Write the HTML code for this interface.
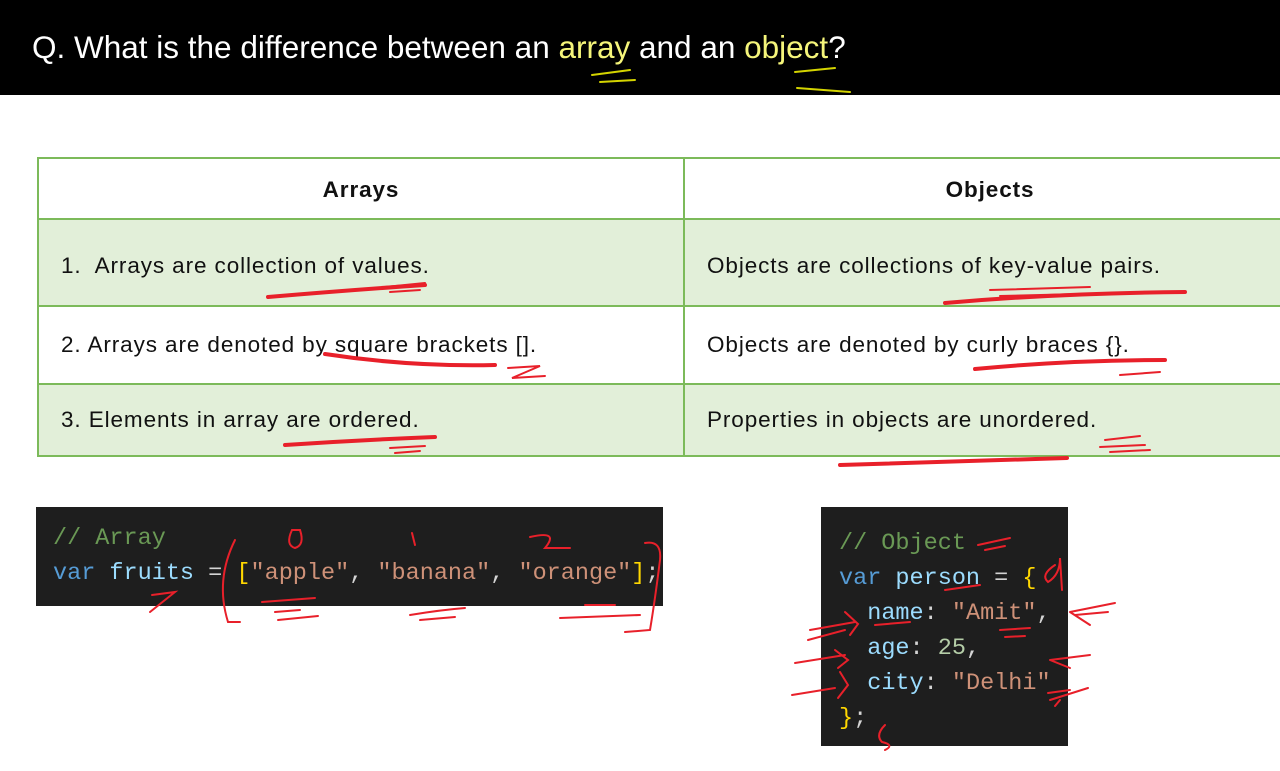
<!DOCTYPE html>
<html><head><meta charset="utf-8"><style>
body{margin:0;width:1280px;height:771px;background:#fff;position:relative;overflow:hidden;font-family:"Liberation Sans",sans-serif}
.top{position:absolute;left:0;top:0;width:1280px;height:95px;background:#000}
.top div{position:absolute;left:32px;top:29px;color:#fff;font-size:31.5px}
.y{color:#f5f57a}
table{position:absolute;left:37px;top:157px;border-collapse:collapse;width:1260px;font-size:22.5px;letter-spacing:0.9px;color:#111}
td{border:2px solid #7cba5a;padding:0 22px}
.h td{background:#fff;height:56px;text-align:center;font-weight:bold;padding-top:3px}
.g td{background:#e2efd9}
.code{position:absolute;background:#1e1e1e;font-family:"Liberation Mono",monospace;font-size:23.5px;line-height:35px;white-space:pre}
.c{color:#6a9955}.k{color:#569cd6}.v{color:#9cdcfe}.s{color:#ce9178}.b{color:#ffd700}.n{color:#b5cea8}.w{color:#d4d4d4}
svg{position:absolute;left:0;top:0}
</style></head><body>
<div class="top"><div>Q. What is the difference between an <span class="y">array</span> and an <span class="y">object</span>?</div></div>
<table>
<tr class="h"><td style="width:600px">Arrays</td><td>Objects</td></tr>
<tr class="g"><td style="height:79px;padding-top:6px">1.&nbsp; Arrays are collection of values.</td><td style="padding-top:6px">Objects are collections of key-value pairs.</td></tr>
<tr><td style="height:76px">2. Arrays are denoted by square brackets [].</td><td>Objects are denoted by curly braces {}.</td></tr>
<tr class="g"><td style="height:70px">3. Elements in array are ordered.</td><td>Properties in objects are unordered.</td></tr>
</table>
<div class="code" style="left:36px;top:507px;width:627px;height:99px;padding:14px 0 0 17px;box-sizing:border-box"><span class="c">// Array</span>
<span class="k">var</span> <span class="v">fruits</span> <span class="w">=</span> <span class="b">[</span><span class="s">"apple"</span><span class="w">, </span><span class="s">"banana"</span><span class="w">, </span><span class="s">"orange"</span><span class="b">]</span><span class="w">;</span></div>
<div class="code" style="left:821px;top:507px;width:247px;height:239px;padding:19px 0 0 18px;box-sizing:border-box"><span class="c">// Object</span>
<span class="k">var</span> <span class="v">person</span> <span class="w">=</span> <span class="b">{</span>
  <span class="v">name</span><span class="w">: </span><span class="s">"Amit"</span><span class="w">,</span>
  <span class="v">age</span><span class="w">: </span><span class="n">25</span><span class="w">,</span>
  <span class="v">city</span><span class="w">: </span><span class="s">"Delhi"</span>
<span class="b">}</span><span class="w">;</span></div>
<svg width="1280" height="771" fill="none" stroke="#e8202a" stroke-width="4" stroke-linecap="round">
<path d="M268 297 Q350 290 425 285"/><path d="M385 287 L425 283 M390 292 L420 290" stroke-width="2"/>
<path d="M945 303 Q1060 293 1185 292"/><path d="M990 290 L1090 287 M1000 296 L1080 294" stroke-width="2"/>
<path d="M325 354 Q410 367 495 365"/><path d="M508 368 L540 366 L512 378 L545 376" stroke-width="2"/>
<path d="M975 369 Q1070 360 1165 360"/><path d="M1120 375 L1160 372" stroke-width="2"/>
<path d="M285 445 Q360 440 435 437"/><path d="M390 448 L425 446 M395 453 L420 451" stroke-width="2"/>
<path d="M840 465 Q950 462 1067 458"/><path d="M1105 440 L1140 436 M1100 447 L1145 445 M1110 452 L1150 450" stroke-width="2"/>
<path d="M592 75 L630 70 M600 82 L635 80 M795 72 L835 68 M797 88 L850 92" stroke="#d4d400" stroke-width="2"/>
<g stroke-width="2">
<path d="M235 540 Q215 580 228 622 L240 622"/><path d="M645 543 Q662 540 660 560 Q655 600 650 630 L625 632"/>
<path d="M292 530 Q285 545 295 548 Q305 545 300 530 Z"/><path d="M412 533 L415 545"/><path d="M530 537 Q560 530 545 548 L570 548"/>
<path d="M262 602 L315 598 M275 612 L300 610 M278 620 L318 616"/><path d="M410 615 Q440 610 465 608 M420 620 L455 617"/>
<path d="M560 618 L640 615 M585 605 L615 605"/><path d="M152 595 L175 592 L150 612"/>
<path d="M978 545 L1010 538 M985 550 L1005 546"/><path d="M1055 565 Q1040 575 1048 582 Q1060 575 1060 558 L1062 590"/>
<path d="M1070 612 L1115 603 M1070 612 L1090 625 M1075 615 L1108 612"/><path d="M1050 660 L1090 655 M1050 660 L1070 668"/>
<path d="M1050 700 L1088 688 M1048 693 L1070 690 M1060 700 L1055 706"/>
<path d="M810 630 L855 622 M845 612 L858 624 L850 635 M808 640 L845 630"/><path d="M795 663 L845 655 M835 650 L848 660 L838 668"/>
<path d="M792 695 L835 688 M840 672 L848 685 L838 698"/><path d="M885 725 Q875 735 882 742 Q895 745 885 750"/>
<path d="M945 590 L980 585 M1000 630 L1030 628 M1005 637 L1025 636 M875 625 L910 622"/>
</g>
</svg>
</body></html>
